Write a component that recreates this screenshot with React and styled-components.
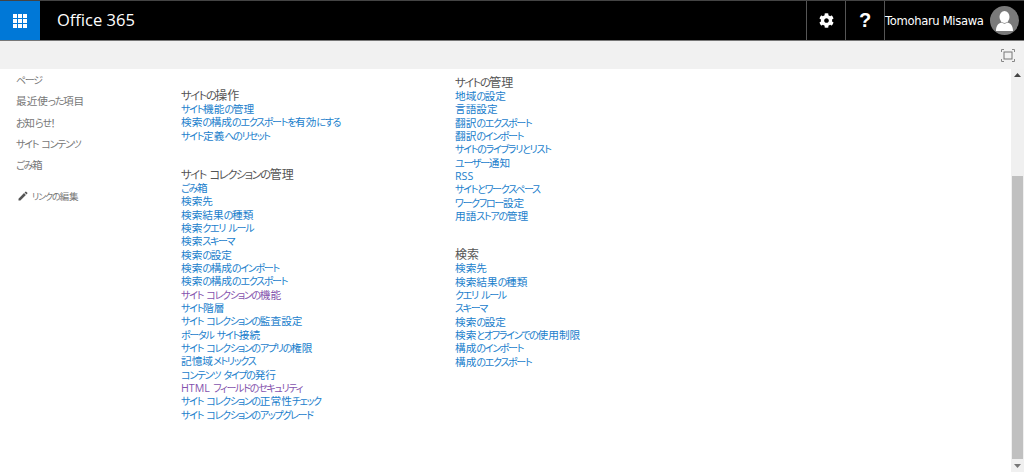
import React from "react";
import styled, { createGlobalStyle } from "styled-components";
import { FaCog } from "react-icons/fa";
import { MdEdit } from "react-icons/md";

const GlobalStyle = createGlobalStyle`
  html, body { margin: 0; padding: 0; height: 100%; overflow: hidden; background: #fff; }
  body { font-family: "Open Sans", "Noto Sans CJK JP", sans-serif; }
`;

const Page = styled.div`
  display: flex;
  flex-direction: column;
  height: 472px;
`;

const TopBar = styled.header`
  display: flex;
  align-items: stretch;
  height: 41px;
  box-sizing: border-box;
  background: #000;
  border-top: 1px solid #444;
  border-bottom: 1px solid #777;
  color: #fff;
`;

const Waffle = styled.div`
  width: 40px;
  background: #0078d7;
  display: flex;
  align-items: center;
  justify-content: center;
`;

const Brand = styled.div`
  flex: 1;
  padding-left: 17px;
  font-size: 16.5px;
  line-height: 38px;
`;

const BarButton = styled.div`
  width: 38px;
  border-left: 1px solid #555;
  display: flex;
  align-items: center;
  justify-content: center;
  font-size: ${(p) => p.$size || 16}px;
  font-weight: 700;
  font-family: "Liberation Sans", sans-serif;
`;

const Account = styled.div`
  display: flex;
  align-items: center;
  justify-content: space-between;
  width: 140px;
  box-sizing: border-box;
  border-left: 1px solid #555;
  padding: 0 5px 0 0;
  font-size: 11.6px;
  font-family: "DejaVu Sans", sans-serif;
  letter-spacing: -0.35px;
`;

const Avatar = styled.div`
  width: 29px;
  height: 29px;
  border-radius: 50%;
  background: #7a7a7a;
  overflow: hidden;
`;

const Ribbon = styled.div`
  height: 28px;
  background: #f1f1f1;
  display: flex;
  align-items: center;
  justify-content: flex-end;
  padding-right: 9px;
  flex-shrink: 0;
`;

const Body = styled.div`
  flex: 1;
  display: flex;
  min-height: 0;
`;

const Content = styled.main`
  flex: 1;
  display: flex;
  font-feature-settings: "palt";
`;

const SideNav = styled.nav`
  width: 181px;
  flex-shrink: 0;
  padding: 1px 0 0 16px;
  box-sizing: border-box;
`;

const NavItem = styled.div`
  height: 21.3px;
  line-height: 21.3px;
  font-size: 10.67px;
  color: #777;
`;

const EditLink = styled.div`
  display: flex;
  align-items: center;
  gap: 3px;
  margin: 10px 0 0 1px;
  height: 20px;
  font-size: 9.6px;
  color: #777;
`;

const Column = styled.section`
  width: 274px;
  flex-shrink: 0;
  padding-top: ${(p) => p.$top}px;
`;

const Group = styled.div`
  margin-bottom: 25px;
`;

const GroupTitle = styled.h3`
  margin: 0;
  height: 14px;
  line-height: 14px;
  font-size: 12px;
  font-weight: 400;
  color: #555;
`;

const LinkItem = styled.a`
  display: block;
  height: 13.33px;
  line-height: 13.33px;
  font-size: 10.67px;
  white-space: nowrap;
  color: ${(p) => (p.$visited ? "#8452ad" : "#1a80cc")};
`;

// kana in the reference font is much narrower than in Noto Sans CJK
const Kana = styled.span`
  font-size: 0.94em;
  letter-spacing: -0.13em;
  word-spacing: 0.2em;
`;

const Scrollbar = styled.div`
  width: 13px;
  background: #f0f0f0;
  display: flex;
  flex-direction: column;
  align-items: center;
  flex-shrink: 0;
`;

const ArrowBox = styled.div`
  height: 13px;
  display: flex;
  align-items: center;
  justify-content: center;
`;

const Thumb = styled.div`
  width: 11px;
  height: 284px;
  margin-top: 94px;
  background: #c0c0c0;
`;

const siteActions = ["サイト機能の管理", "検索の構成のエクスポートを有効にする", "サイト定義へのリセット"];

const collectionAdmin = [
  { t: "ごみ箱" },
  { t: "検索先" },
  { t: "検索結果の種類" },
  { t: "検索クエリ ルール" },
  { t: "検索スキーマ" },
  { t: "検索の設定" },
  { t: "検索の構成のインポート" },
  { t: "検索の構成のエクスポート" },
  { t: "サイト コレクションの機能", v: true },
  { t: "サイト階層" },
  { t: "サイト コレクションの監査設定" },
  { t: "ポータル サイト接続" },
  { t: "サイト コレクションのアプリの権限" },
  { t: "記憶域メトリックス" },
  { t: "コンテンツ タイプの発行" },
  { t: "HTML フィールドのセキュリティ", v: true },
  { t: "サイト コレクションの正常性チェック" },
  { t: "サイト コレクションのアップグレード" },
];

const siteAdmin = [
  "地域の設定",
  "言語設定",
  "翻訳のエクスポート",
  "翻訳のインポート",
  "サイトのライブラリとリスト",
  "ユーザー通知",
  "RSS",
  "サイトとワークスペース",
  "ワークフロー設定",
  "用語ストアの管理",
];

const search = [
  "検索先",
  "検索結果の種類",
  "クエリ ルール",
  "スキーマ",
  "検索の設定",
  "検索とオフラインでの使用制限",
  "構成のインポート",
  "構成のエクスポート",
];

const navItems = ["ページ", "最近使った項目", "お知らせ！", "サイト コンテンツ", "ごみ箱"];

const JpText = ({ children }) =>
  children.split(/([\u3041-\u30ff ]+)/).map((part, i) =>
    i % 2 ? <Kana key={i}>{part}</Kana> : part
  );

const WaffleIcon = () => (
  <svg width="14" height="14" viewBox="0 0 14 14" fill="#fff">
    {[0, 5, 10].map((y) =>
      [0, 5, 10].map((x) => <rect key={`${x}-${y}`} x={x} y={y} width="4" height="4" />)
    )}
  </svg>
);

const PersonIcon = () => (
  <svg width="29" height="29" viewBox="0 0 29 29" fill="#fff">
    <ellipse cx="14.5" cy="11" rx="5" ry="6" />
    <path d="M6 25c0-5 2-7.500 5.500-8.500 2 1.500 4 1.500 6 0C21 17.500 23 20 23 25z" />
  </svg>
);

const FocusIcon = () => (
  <svg width="14" height="13" viewBox="0 0 14 13" fill="none" stroke="#888" strokeWidth="1">
    <rect x="3" y="3" width="8" height="7" stroke="#777" />
    <path d="M.5 3V.5H3M11 .5h2.500V3M13.500 10v2.500H11M3 12.500H.5V10" />
  </svg>
);

export default function App() {
  return (
    <Page>
      <GlobalStyle />
      <TopBar>
        <Waffle>
          <WaffleIcon />
        </Waffle>
        <Brand>Office 365</Brand>
        <BarButton>
          <FaCog size={15} />
        </BarButton>
        <BarButton $size={20}>?</BarButton>
        <Account>
          Tomoharu Misawa
          <Avatar>
            <PersonIcon />
          </Avatar>
        </Account>
      </TopBar>
      <Ribbon>
        <FocusIcon />
      </Ribbon>
      <Body>
        <Content>
          <SideNav>
            {navItems.map((n) => (
              <NavItem key={n}>
                <JpText>{n}</JpText>
              </NavItem>
            ))}
            <EditLink>
              <MdEdit size={12} color="#555" />
              <span>
                <JpText>リンクの編集</JpText>
              </span>
            </EditLink>
          </SideNav>
          <Column $top={20}>
            <Group>
              <GroupTitle>
                <JpText>サイトの操作</JpText>
              </GroupTitle>
              {siteActions.map((t) => (
                <LinkItem key={t}>
                  <JpText>{t}</JpText>
                </LinkItem>
              ))}
            </Group>
            <Group>
              <GroupTitle>
                <JpText>サイト コレクションの管理</JpText>
              </GroupTitle>
              {collectionAdmin.map((l) => (
                <LinkItem key={l.t} $visited={l.v}>
                  <JpText>{l.t}</JpText>
                </LinkItem>
              ))}
            </Group>
          </Column>
          <Column $top={7}>
            <Group>
              <GroupTitle>
                <JpText>サイトの管理</JpText>
              </GroupTitle>
              {siteAdmin.map((t) => (
                <LinkItem key={t}>
                  <JpText>{t}</JpText>
                </LinkItem>
              ))}
            </Group>
            <Group>
              <GroupTitle>検索</GroupTitle>
              {search.map((t) => (
                <LinkItem key={t}>
                  <JpText>{t}</JpText>
                </LinkItem>
              ))}
            </Group>
          </Column>
        </Content>
        <Scrollbar>
          <ArrowBox>
            <svg width="7" height="4" viewBox="0 0 7 4" fill="#444">
              <path d="M3.500 0L7 4H0z" />
            </svg>
          </ArrowBox>
          <Thumb />
          <ArrowBox>
            <svg width="7" height="4" viewBox="0 0 7 4" fill="#777">
              <path d="M0 0h7L3.500 4z" />
            </svg>
          </ArrowBox>
        </Scrollbar>
      </Body>
    </Page>
  );
}
